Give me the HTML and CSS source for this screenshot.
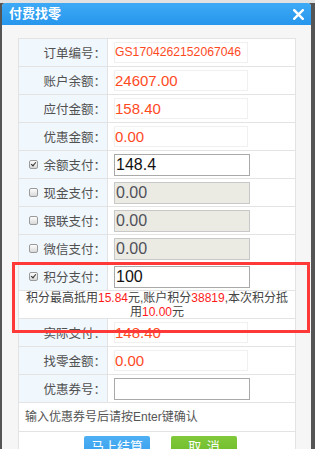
FILE: index.html
```html
<!DOCTYPE html>
<html lang="zh-CN">
<head>
<meta charset="utf-8">
<title>付费找零</title>
<link rel="stylesheet" href="styles.css">
</head>
<body>
<div class="dialog">
  <div class="titlebar">
    <span class="title">付费找零</span>
    <span class="close"><svg width="11" height="11" viewBox="0 0 11 11"><path d="M1.2 1.2 L9.8 9.8 M9.8 1.2 L1.2 9.8" stroke="#fff" stroke-width="2.4" stroke-linecap="square" fill="none"/></svg></span>
  </div>
  <div class="content">
    <div class="form">
      <div class="lab"><span class="lbl">订单编号：</span></div>
      <div class="cell"><span class="val small">GS1704262152067046</span></div>

      <div class="lab"><span class="lbl">账户余额：</span></div>
      <div class="cell"><span class="val">24607.00</span></div>

      <div class="lab"><span class="lbl">应付金额：</span></div>
      <div class="cell"><span class="val">158.40</span></div>

      <div class="lab"><span class="lbl">优惠金额：</span></div>
      <div class="cell"><span class="val">0.00</span></div>

      <div class="lab"><span class="cb on"></span><span class="lbl">余额支付：</span></div>
      <div class="cell"><input class="inp" type="text" value="148.4"></div>

      <div class="lab"><span class="cb"></span><span class="lbl">现金支付：</span></div>
      <div class="cell"><input class="inp" type="text" value="0.00" disabled></div>

      <div class="lab"><span class="cb"></span><span class="lbl">银联支付：</span></div>
      <div class="cell"><input class="inp" type="text" value="0.00" disabled></div>

      <div class="lab"><span class="cb"></span><span class="lbl">微信支付：</span></div>
      <div class="cell"><input class="inp" type="text" value="0.00" disabled></div>

      <div class="lab"><span class="cb on"></span><span class="lbl">积分支付：</span></div>
      <div class="cell"><input class="inp" type="text" value="100"></div>

      <div class="info">积分最高抵用<em>15.84</em>元,账户积分<em>38819</em>,本次积分抵用<em>10.00</em>元</div>

      <div class="lab"><span class="lbl">实际支付：</span></div>
      <div class="cell"><span class="val">148.40</span></div>

      <div class="lab"><span class="lbl">找零金额：</span></div>
      <div class="cell"><span class="val">0.00</span></div>

      <div class="lab"><span class="lbl">优惠券号：</span></div>
      <div class="cell"><input class="inp" type="text" value=""></div>

      <div class="hint">输入优惠券号后请按Enter键确认</div>

      <div class="btns">
        <button class="btn blue" type="button">马上结算</button>
        <button class="btn green" type="button">取 消</button>
      </div>
    </div>
  </div>
  <div class="highlight"></div>
</div>
</body>
</html>
```
FILE: styles.css
```css
html, body {
  margin: 0;
  padding: 0;
  height: 100%;
  overflow: hidden;
}
body {
  background: linear-gradient(#e2e2e2 0, #e2e2e2 3px, #555 3px, #555 100%);
  font-family: "Liberation Sans", "Noto Sans CJK SC", sans-serif;
  font-size: 12px;
  color: #555;
}
.dialog {
  position: relative;
  margin: 3px 0 0 2px;
  width: 309px;
  height: 460px;
  background: #f6f6f6;
  border-radius: 4px 4px 0 0;
  overflow: hidden;
}
.titlebar {
  display: flex;
  align-items: center;
  height: 22px;
  padding: 0 7px;
  background: linear-gradient(#3eaaf6, #2796ec);
  color: #fff;
}
.title {
  font-weight: bold;
  font-size: 13px;
  line-height: 22px;
}
.close {
  margin-left: auto;
  display: flex;
  width: 11px;
  height: 11px;
  margin-top: 1px;
}
.content {
  padding: 13px 15px 0 16px;
}
.form {
  display: grid;
  grid-template-columns: 89px 188px;
  border-top: 1px solid #e3e3e3;
  border-left: 1px solid #e3e3e3;
  background: #fff;
}
.lab, .cell, .info, .hint, .btns {
  box-sizing: border-box;
  border-right: 1px solid #e3e3e3;
  border-bottom: 1px solid #e3e3e3;
  height: 28px;
}
.lab {
  display: flex;
  align-items: center;
  background: #f0f7fd;
  padding: 0 1px 0 10px;
}
.lbl {
  margin-left: auto;
  color: #505050;
  font-size: 12.5px;
}
.cb {
  width: 9px;
  height: 9px;
  box-sizing: border-box;
  border: 1px solid #9a9a9a;
  border-radius: 2px;
  background: linear-gradient(#fdfdfd, #d8d8d8);
  position: relative;
}
.cb.on::after {
  content: "";
  position: absolute;
  left: 2px;
  top: 0px;
  width: 2px;
  height: 4px;
  border-right: 1.5px solid #333;
  border-bottom: 1.5px solid #333;
  transform: rotate(40deg);
}
.cell {
  display: flex;
  align-items: center;
  padding-left: 6px;
}
.val {
  box-sizing: border-box;
  width: 134px;
  height: 21px;
  border: 1px solid #f0f0f0;
  color: #ff4a1e;
  font-size: 15px;
  line-height: 19px;
  padding-left: 0;
  white-space: nowrap;
  overflow: hidden;
}
.val.small {
  font-size: 12.2px;
}
.inp {
  box-sizing: border-box;
  width: 136px;
  height: 22px;
  margin: 0;
  border: 1px solid #a9a9a9;
  padding: 0 1px;
  font-family: "Liberation Sans", sans-serif;
  font-size: 16px;
  color: #111;
  background: #fff;
  outline: none;
  border-radius: 0;
}
.inp:disabled {
  background: #ebebe4;
  border-color: #c8c8c8;
  color: #50505a;
}
.info {
  grid-column: 1 / 3;
  text-align: center;
  line-height: 14px;
  padding: 0 6px;
  color: #444;
}
.info em {
  font-style: normal;
  color: #ff1a1a;
}
.hint {
  grid-column: 1 / 3;
  height: 29px;
  line-height: 28px;
  padding-left: 6px;
  color: #555;
}
.btns {
  grid-column: 1 / 3;
  height: 40px;
  display: flex;
  justify-content: center;
  gap: 21px;
  padding: 4px 0 0 7px;
  align-items: flex-start;
}
.btn {
  width: 66px;
  height: 28px;
  border: none;
  border-radius: 2px;
  color: #fff;
  font-family: "Liberation Sans", "Noto Sans CJK SC", sans-serif;
  font-size: 13px;
  line-height: 18px;
  padding: 2px 0 0;
  margin: 0;
  display: flex;
  justify-content: center;
  align-items: flex-start;
  white-space: pre;
}
.btn.blue {
  background: linear-gradient(#4eb0f4, #2f98ea);
}
.btn.green {
  background: linear-gradient(#80c93a, #67b524);
  word-spacing: 2px;
}
.highlight {
  position: absolute;
  left: 10px;
  top: 259px;
  width: 298px;
  height: 71px;
  box-sizing: border-box;
  border: 3px solid #ff3838;
  pointer-events: none;
}
```
